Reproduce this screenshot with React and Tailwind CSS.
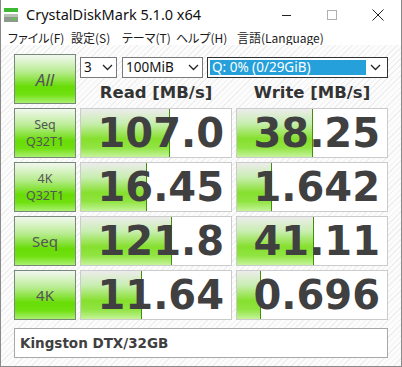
import React from 'react';

const rows = [
  { label: ['Seq', 'Q32T1'], read: '107.0', write: '38.25', rw: 89, ww: 76 },
  { label: ['4K', 'Q32T1'], read: '16.45', write: '1.642', rw: 66, ww: 35 },
  { label: ['Seq'], read: '121.8', write: '41.11', rw: 91, ww: 77 },
  { label: ['4K'], read: '11.64', write: '0.696', rw: 61, ww: 24 },
];

const AppIcon = () => (
  <svg width="14" height="14" viewBox="0 0 14 14">
    <rect x="0" y="0" width="14" height="4" fill="#3cb832" />
    <rect x="0" y="6" width="14" height="8" fill="#8c9a8c" />
    <rect x="0" y="6" width="14" height="3" fill="#b6c2b6" />
    <rect x="9" y="10" width="3" height="2" fill="#4fd23c" />
  </svg>
);

const Chevron = () => (
  <svg width="11" height="7" viewBox="0 0 11 7">
    <polyline points="1,1 5.5,5.5 10,1" fill="none" stroke="#222" strokeWidth="1.3" />
  </svg>
);

const Combo = ({ width, children, focused }) => (
  <div
    className={`flex items-center h-[21px] bg-white border ${focused ? 'border-[#333] p-[2px]' : 'border-[#7a7a7a] pl-[3px]'} ${width}`}
  >
    {children}
  </div>
);

const Menu = ({ text, k, after, w }) => (
  <div className={`${w} text-[12px] text-[#1a1a1a] [font-feature-settings:'palt']`}>
    {text}(<span className="underline underline-offset-2">{k}</span>{after})
  </div>
);

const GreenButton = ({ children }) => (
  <div className="h-[50px] flex flex-col items-center justify-center border border-[#798979] bg-[linear-gradient(180deg,#f2f8f0_0%,#b8ec90_35%,#68dc06_66%,#70e010_82%,#aaf070_100%)] text-[#555] font-['Noto_Sans',sans-serif] leading-[17px]">
    {children}
  </div>
);

const ValueBox = ({ value, width }) => (
  <div className="relative h-[50px] bg-white border border-[#cbcbcb] flex items-center justify-end pr-[7px]">
    <div
      className="absolute left-0 top-0 bottom-0 border-r border-r-[#3f8f0a] bg-[linear-gradient(180deg,#ececec_0%,#c8eeb0_30%,#86e02e_62%,#90e440_80%,#c4f39a_100%)]"
      style={{ width }}
    />
    <span className="relative font-['DejaVu_Sans',sans-serif] font-bold text-[40px] leading-none text-[#404040]">
      {value}
    </span>
  </div>
);

export default function App() {
  return (
    <div className="w-[402px] h-[367px] flex flex-col bg-white border-x border-b border-[#8a8a8a] font-['Noto_Sans',sans-serif] overflow-hidden">
      <div className="h-[30px] flex items-center pl-[3px] shrink-0">
        <AppIcon />
        <span className="ml-[8px] text-[14.5px] text-[#111]">CrystalDiskMark 5.1.0 x64</span>
        <div className="ml-auto flex items-center h-full">
          <div className="w-[46px] h-full flex items-center justify-center">
            <div className="w-[9px] h-px bg-[#222]" />
          </div>
          <div className="w-[46px] h-full flex items-center justify-center">
            <div className="w-[10px] h-[10px] border border-[#b0b0b0]" />
          </div>
          <div className="w-[46px] h-full flex items-center justify-center">
            <svg width="12" height="12" viewBox="0 0 12 12">
              <path d="M0.5 0.5 L11.5 11.5 M11.5 0.5 L0.5 11.5" stroke="#222" strokeWidth="1" />
            </svg>
          </div>
        </div>
      </div>
      <div className="h-[15px] flex items-center pl-[7px] shrink-0 font-['Noto_Sans_CJK_JP',sans-serif]">
        <Menu text="ファイル" k="F" w="w-[63px]" />
        <Menu text="設定" k="S" w="w-[51px]" />
        <Menu text="テーマ" k="T" w="w-[54px]" />
        <Menu text="ヘルプ" k="H" w="w-[61px]" />
        <div className="text-[12px] text-[#1a1a1a] [font-feature-settings:'palt']">
          言語(<span className="underline underline-offset-2">L</span>anguage)
        </div>
      </div>
      <div className="flex-1 pt-[9px] pl-[13px] bg-[repeating-linear-gradient(135deg,#efefef_0px,#efefef_1px,#fcfcfc_1px,#fcfcfc_4px)]">
        <div className="grid grid-cols-[62px_152px_152px] gap-x-[4px] gap-y-[4px]">
          <GreenButton>
            <span className="italic text-[17px] text-[#555]">All</span>
          </GreenButton>
          <div className="col-span-2 flex flex-col">
            <div className="flex items-center mt-[3px]">
              <Combo width="w-[37px]">
                <span className="text-[13.5px] text-[#111] flex-1">3</span>
                <span className="pr-[3px] flex"><Chevron /></span>
              </Combo>
              <div className="w-[5px]" />
              <Combo width="w-[81px]">
                <span className="text-[13.5px] text-[#111] flex-1">100MiB</span>
                <span className="pr-[3px] flex"><Chevron /></span>
              </Combo>
              <div className="w-[4px]" />
              <Combo width="w-[181px]" focused>
                <div className="flex-1 h-full bg-[#26a0da] flex items-center pl-[2px] text-[13.5px] text-white">
                  Q: 0% (0/29GiB)
                </div>
                <span className="px-[4px] flex"><Chevron /></span>
              </Combo>
            </div>
            <div className="grid grid-cols-[152px_152px] gap-x-[4px] mt-[5px] font-['DejaVu_Sans',sans-serif] font-bold text-[16.5px] text-[#333] leading-[20px]">
              <div className="text-center">Read [MB/s]</div>
              <div className="text-center">Write [MB/s]</div>
            </div>
          </div>
          {rows.map((r) => (
            <React.Fragment key={r.read}>
              <GreenButton>
                {r.label.length === 2 ? (
                  <>
                    <span className="text-[12.5px]">{r.label[0]}</span>
                    <span className="text-[12.5px]">{r.label[1]}</span>
                  </>
                ) : (
                  <span className="text-[15px]">{r.label[0]}</span>
                )}
              </GreenButton>
              <ValueBox value={r.read} width={r.rw} />
              <ValueBox value={r.write} width={r.ww} />
            </React.Fragment>
          ))}
          <div className="col-span-3 mt-[4px] h-[30px] bg-white border border-[#a8a8a8] flex items-center pl-[5px] font-['DejaVu_Sans',sans-serif] font-bold text-[13.5px] text-[#404040]">
            Kingston DTX/32GB
          </div>
        </div>
      </div>
    </div>
  );
}
